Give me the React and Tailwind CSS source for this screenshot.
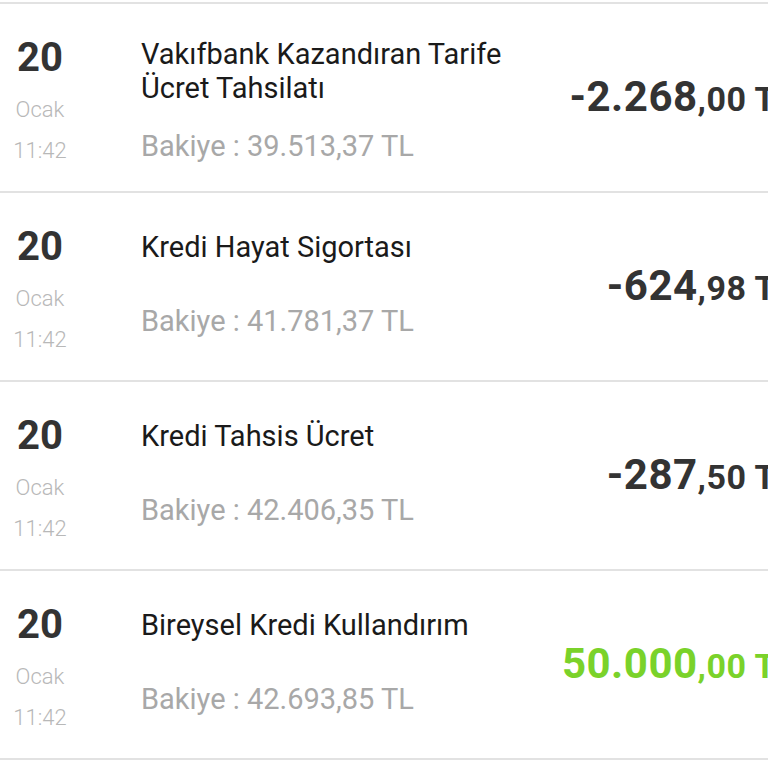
import React from 'react';

const transactions = [
    { day: '20', month: 'Ocak', time: '11:42', title: ['Vakıfbank Kazandıran Tarife', 'Ücret Tahsilatı'], balance: '39.513,37 TL', amount: '-2.268', cents: ',00', positive: false },
    { day: '20', month: 'Ocak', time: '11:42', title: ['Kredi Hayat Sigortası'], balance: '41.781,37 TL', amount: '-624', cents: ',98', positive: false },
    { day: '20', month: 'Ocak', time: '11:42', title: ['Kredi Tahsis Ücret'], balance: '42.406,35 TL', amount: '-287', cents: ',50', positive: false },
    { day: '20', month: 'Ocak', time: '11:42', title: ['Bireysel Kredi Kullandırım'], balance: '42.693,85 TL', amount: '50.000', cents: ',00', positive: true },
];

export default function App() {
    return (
        <div className="w-[768px] h-[768px] overflow-hidden bg-white pt-[2px]" style={{ fontFamily: 'Roboto, "Liberation Sans", sans-serif' }}>
            <div className="w-[820px] border-b-2 border-[#e2e2e2]">
                {transactions.map((t, i) => (
                    <div key={i} className="flex h-[189px] border-t-2 border-[#e2e2e2]">
                        {/* Date */}
                        <div className="w-[80px] shrink-0 flex flex-col items-center pt-[30px]">
                            <span className="text-[40px] leading-[48px] font-bold text-[#333333]">{t.day}</span>
                            <span className="text-[22px] leading-[26px] font-light text-[#b8b8b8] mt-[15px]">{t.month}</span>
                            <span className="text-[22px] leading-[26px] font-light text-[#b8b8b8] mt-[15px]">{t.time}</span>
                        </div>

                        {/* Description */}
                        <div className={`flex-1 flex flex-col pl-[61px] ${t.title.length > 1 ? 'pt-[33px]' : 'pt-[37px]'}`}>
                            <div className="text-[29px] leading-[34px] text-[#1a1a1a]">
                                {t.title.map((line, j) => (
                                    <div key={j}>{line}</div>
                                ))}
                            </div>
                            <div className={`text-[29px] leading-[34px] text-[#a8a8a8] ${t.title.length > 1 ? 'mt-[24px]' : 'mt-[40px]'}`}>
                                Bakiye : {t.balance}
                            </div>
                        </div>

                        {/* Amount */}
                        <div className="flex items-center pr-[25px] pb-[2px]">
                            <span className={`font-bold whitespace-nowrap tracking-[0.5px] ${t.positive ? 'text-[#7ad22a]' : 'text-[#333333]'}`}>
                                <span className="text-[42px]">{t.amount}</span>
                                <span className="text-[34px]">{t.cents} TL</span>
                            </span>
                        </div>
                    </div>
                ))}
            </div>
        </div>
    );
}
